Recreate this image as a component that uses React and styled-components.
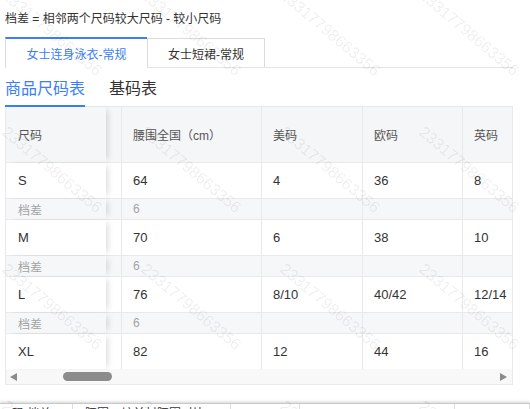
import React from "react";
import styled, { createGlobalStyle } from "styled-components";

const GlobalStyle = createGlobalStyle`
    html, body {
        margin: 0;
        height: 409px;
        overflow: hidden;
        background: #fff;
    }

    body {
        font-family: "Liberation Sans", "Noto Sans CJK SC", sans-serif;
        color: #333;
    }
`;

const BLUE = "#3b7ef8";
const LINE = "#e9e9e9";

const Page = styled.div`
    position: relative;
    padding: 10px 17px 0 5px;
`;

const Note = styled.div`
    font-size: 12px;
    line-height: 18px;
    color: #333;
`;

const CardTabBar = styled.div`
    display: flex;
    align-items: flex-end;
    height: 30px;
    margin-top: 9px;
    border-bottom: 1px solid #e4e4e4;
`;

const CardTab = styled.div`
    display: flex;
    align-items: center;
    justify-content: center;
    box-sizing: border-box;
    padding: 0 20px;
    font-size: 12px;
    background: #fff;
    color: ${p => (p.active ? BLUE : "#333")};
    height: ${p => (p.active ? "31px" : "29px")};
    margin-bottom: ${p => (p.active ? "-1px" : "0")};
    border-top: ${p => (p.active ? `2px solid ${BLUE}` : "1px solid #dcdcdc")};
    border-left: 1px solid #dcdcdc;
    border-right: ${p => (p.active ? "none" : "1px solid #dcdcdc")};
    width: ${p => p.width}px;
`;

const SubTabBar = styled.div`
    display: flex;
    gap: 24px;
    border-bottom: 1px solid ${LINE};
`;

const SubTab = styled.div`
    font-size: 16px;
    line-height: 22px;
    padding: 10px 0 5px;
    margin-bottom: -1px;
    color: ${p => (p.active ? BLUE : "#333")};
    border-bottom: 2px solid ${p => (p.active ? BLUE : "transparent")};
    width: ${p => (p.active ? "80px" : "auto")};
`;

const TableBox = styled.div`
    border: 1px solid ${LINE};
    border-top: none;
`;

const Row = styled.div`
    display: grid;
    grid-template-columns: 100px 15px 140px 101px 100px 50px;
    box-sizing: border-box;
    height: ${p => p.height}px;
    background: ${p => p.bg};
    border-bottom: ${p => (p.last ? "none" : `1px solid ${LINE}`)};
`;

const Cell = styled.div`
    display: flex;
    align-items: center;
    padding-left: ${p => (p.first ? 12 : 11)}px;
    box-sizing: border-box;
    white-space: nowrap;
    overflow: hidden;
    font-size: ${p => (p.kind === "main" ? 13 : 12)}px;
    color: ${p => (p.kind === "main" ? "#333" : p.kind === "diff" ? "#a3a3a3" : "#555")};
    border-left: ${p => (p.first || p.strip ? "none" : `1px solid ${LINE}`)};
`;

const FixedCell = styled(Cell)`
    position: relative;
    z-index: 1;
    background: inherit;
    box-shadow: 5px 0 6px -3px rgba(0, 0, 0, 0.14);
`;

const ScrollBar = styled.div`
    display: flex;
    align-items: center;
    justify-content: space-between;
    height: 15px;
    padding: 0 5px 0 4px;
    background: #f8f8f8;
`;

const Arrow = styled.div`
    width: 0;
    height: 0;
    border-top: 4.5px solid transparent;
    border-bottom: 4.5px solid transparent;
    border-${p => (p.dir === "left" ? "right" : "left")}: 7px solid #8a8a8a;
`;

const Track = styled.div`
    flex: 1;
    display: flex;
    padding-left: 46px;
`;

const Thumb = styled.div`
    width: 49px;
    height: 9px;
    border-radius: 5px;
    background: #8c8c8c;
`;

const BottomBar = styled.div`
    display: flex;
    margin: 18px -17px 0 -5px;
    height: 30px;
    border-top: 1px solid #c8c8c8;
    box-shadow: 0 -1px 3px rgba(0, 0, 0, 0.18);
    font-size: 12px;
    line-height: 18px;
    color: #333;
`;

const BottomCell = styled.div`
    width: ${p => p.width}px;
    padding: 1px 12px 0;
    box-sizing: border-box;
    border-right: 1px solid #ddd;
    white-space: nowrap;
    overflow: hidden;
`;

const Watermarks = styled.div`
    position: absolute;
    inset: 0;
    height: 409px;
    overflow: hidden;
    pointer-events: none;
    z-index: 5;
`;

const Mark = styled.span`
    position: absolute;
    font-family: "Liberation Sans", sans-serif;
    font-size: 16px;
    color: rgba(0, 0, 0, 0.075);
    transform: rotate(40deg);
    transform-origin: left top;
    white-space: nowrap;
`;

const columns = ["腰围全国（cm）", "美码", "欧码", "英码"];

const sizes = [
    { size: "S", values: ["64", "4", "36", "8"] },
    { size: "M", values: ["70", "6", "38", "10"] },
    { size: "L", values: ["76", "8/10", "40/42", "12/14"] },
    { size: "XL", values: ["82", "12", "44", "16"] }
];

const rows = sizes.flatMap((s, i) => {
    const main = { kind: "main", label: s.size, values: s.values, height: 36 };
    if (i === sizes.length - 1) return [{ ...main, height: 35, last: true }];
    return [main, { kind: "diff", label: "档差", values: ["6", "", "", ""], height: 21 }];
});

const TableRow = ({ kind, label, values, height, last }) => {
    const bg = kind === "head" ? "#f5f6f8" : kind === "diff" ? "#f6f7f9" : "#fff";
    return (
        <Row height={height} bg={bg} last={last}>
            <FixedCell first kind={kind}>
                {label}
            </FixedCell>
            <Cell strip kind={kind} />
            {values.map((v, i) => (
                <Cell key={i} kind={kind}>
                    {v}
                </Cell>
            ))}
        </Row>
    );
};

const WatermarkLayer = () => {
    const marks = [];
    for (let r = 0; r < 4; r++) {
        for (let c = 0; c < 4; c++) {
            marks.push({ left: 10 + c * 139, top: -14 + r * 137 });
        }
    }
    return (
        <Watermarks>
            {marks.map((m, i) => (
                <Mark key={i} style={{ left: m.left, top: m.top }}>
                    23317798663356
                </Mark>
            ))}
        </Watermarks>
    );
};

const App = () => (
    <Page>
        <GlobalStyle />
        <Note>档差 = 相邻两个尺码较大尺码 - 较小尺码</Note>

        <CardTabBar>
            <CardTab active width={142}>
                女士连身泳衣-常规
            </CardTab>
            <CardTab width={118}>女士短裙-常规</CardTab>
        </CardTabBar>

        <SubTabBar>
            <SubTab active>商品尺码表</SubTab>
            <SubTab>基码表</SubTab>
        </SubTabBar>

        <TableBox>
            <TableRow kind="head" label="尺码" values={columns} height={56} />
            {rows.map((row, i) => (
                <TableRow key={i} {...row} />
            ))}
            <ScrollBar>
                <Arrow dir="left" />
                <Track>
                    <Thumb />
                </Track>
                <Arrow dir="right" />
            </ScrollBar>
        </TableBox>

        <BottomBar>
            <BottomCell width={73}>码 档差</BottomCell>
            <BottomCell width={158}>腰围：较前封腰围对比</BottomCell>
            <BottomCell width={69} />
            <BottomCell width={155} />
            <BottomCell width={75} />
        </BottomBar>

        <WatermarkLayer />
    </Page>
);

export default App;
